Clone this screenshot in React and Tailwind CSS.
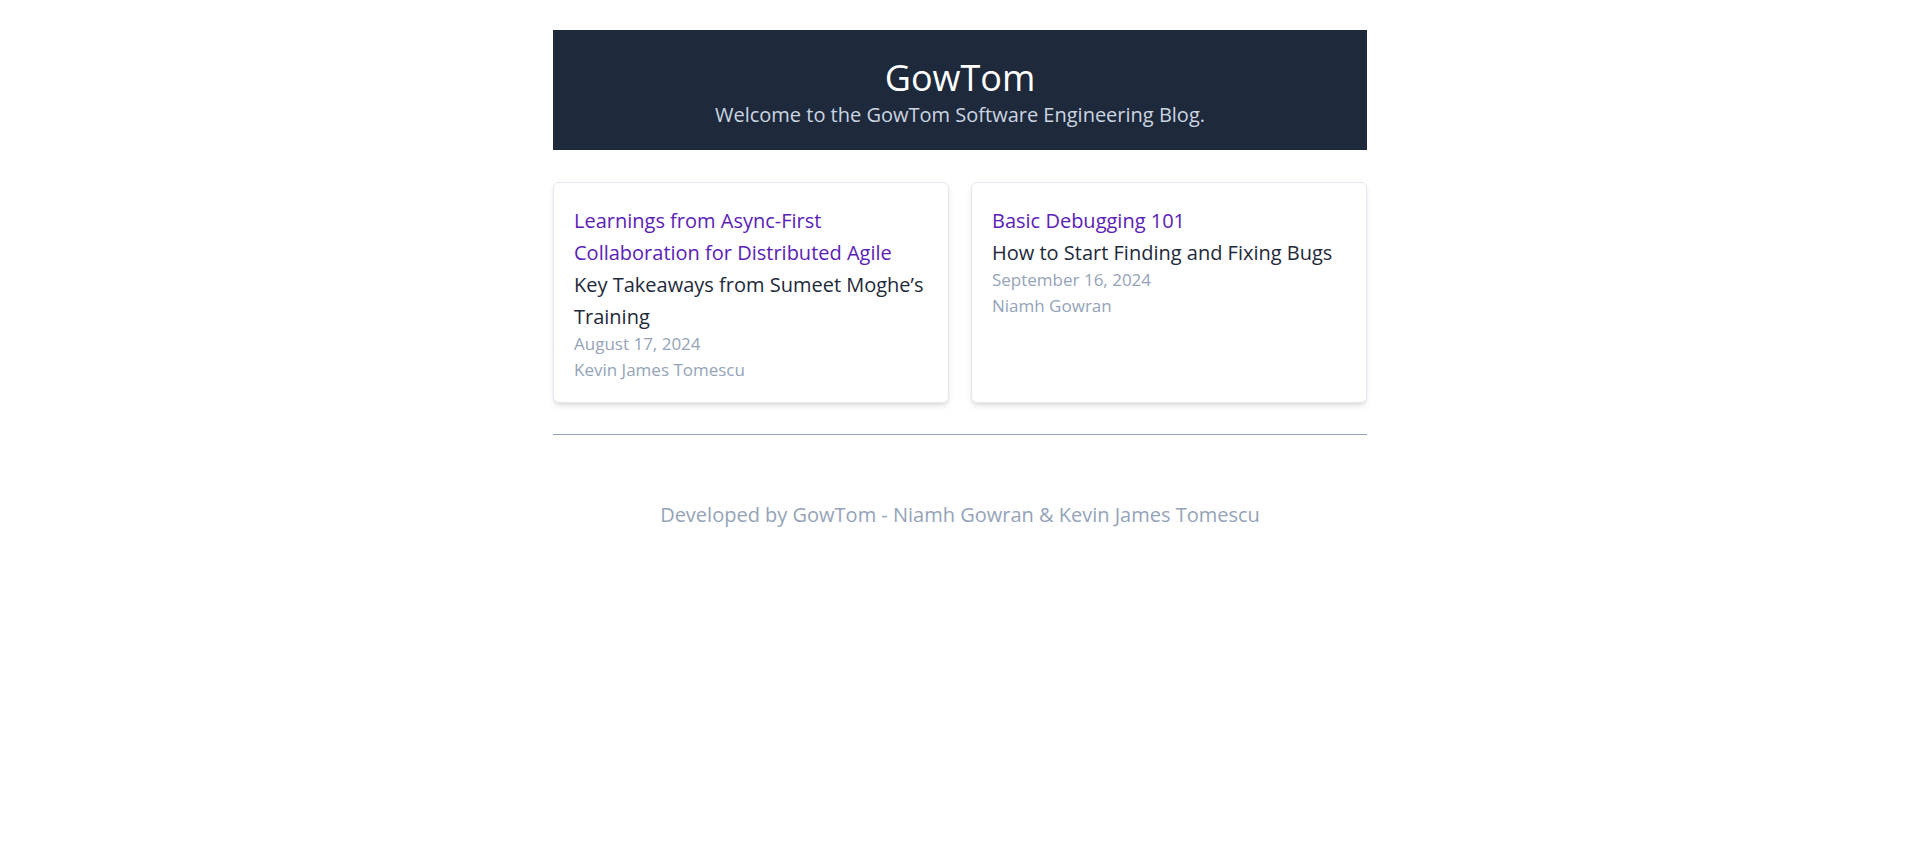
export default function App() {
  const posts = [
    {
      title: "Learnings from Async-First Collaboration for Distributed Agile",
      subtitle: "Key Takeaways from Sumeet Moghe’s Training",
      date: "August 17, 2024",
      author: "Kevin James Tomescu",
    },
    {
      title: "Basic Debugging 101",
      subtitle: "How to Start Finding and Fixing Bugs",
      date: "September 16, 2024",
      author: "Niamh Gowran",
    },
  ];
  return (
    <div className="min-h-screen bg-white font-['Open_Sans','Noto_Sans',sans-serif]">
      <div className="mx-auto w-[814px] pt-[30px]">
        <header className="bg-[#1e293b] pt-[26px] pb-[19px] text-center">
          <h1 className="text-[36px] leading-[43px] text-white">GowTom</h1>
          <p className="text-[20px] leading-[32px] text-[#cbd5e1]">
            Welcome to the GowTom Software Engineering Blog.
          </p>
        </header>
        <main className="mt-8 grid grid-cols-2 gap-[22px]">
          {posts.map((p) => (
            <article
              key={p.title}
              className="rounded-md border border-[#e2e8f0] bg-white px-5 pt-[22px] pb-[20px] shadow-md"
            >
              <h2 className="text-[20px] leading-[32px] text-[#5b21b6]">{p.title}</h2>
              <h3 className="text-[20px] leading-[32px] text-[#1e293b]">{p.subtitle}</h3>
              <p className="-mt-[2px] text-[17px] leading-[25.6px] text-[#94a3b8]">{p.date}</p>
              <p className="text-[17px] leading-[25.6px] text-[#94a3b8]">{p.author}</p>
            </article>
          ))}
        </main>
        <hr className="mt-[31px] border-0 border-t border-[#94a3b8]" />
        <footer className="pt-16 text-center text-[20px] leading-[32px] text-[#94a3b8]">
          Developed by GowTom - Niamh Gowran &amp; Kevin James Tomescu
        </footer>
      </div>
    </div>
  );
}
